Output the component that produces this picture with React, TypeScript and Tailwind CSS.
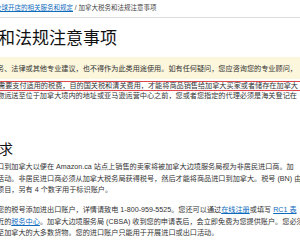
import type React from "react";

const FONT = "font-['Liberation_Sans','Noto_Sans_CJK_SC',sans-serif]";

const A: React.FC<{ children: React.ReactNode }> = ({ children }) => (
  <a href="#" className="text-[#0f6cbd] underline underline-offset-1">
    {children}
  </a>
);

const Line: React.FC<{ children: React.ReactNode; className?: string }> = ({
  children,
  className = "",
}) => (
  <div className={`-ml-[3px] whitespace-nowrap ${className}`}>{children}</div>
);

export default function App() {
  return (
    <div
      className={`w-[300px] h-[240px] overflow-hidden bg-white text-[#333] ${FONT}`}
    >
      {/* breadcrumb */}
      <div className="h-[18px] border-b border-[#dddddd] text-[6.5px] leading-[16px] whitespace-nowrap -ml-[5px] pl-0 w-[310px]">
        <A>全球开店的相关服务和规定</A>
        <span className="text-[#444]"> / 加拿大税务和法规注意事项</span>
      </div>

      {/* title */}
      <h1 className="mt-[9px] -ml-[87px] whitespace-nowrap text-[17px] leading-[24px] text-[#111] font-normal">
        加拿大税务和法规注意事项
      </h1>

      {/* notice */}
      <div className="mt-[6px] h-[22px] pt-[3px] bg-[#fcf6dc] text-[7.15px] leading-[19px] text-[#333]">
        <Line>
          务、法律或其他专业建议，也不得作为此类用途使用。如有任何疑问，您应咨询您的专业顾问，
        </Line>
      </div>

      {/* highlighted line */}
      <div className="mt-[2px] -ml-[10px] w-[330px] border border-[#e0474c] pl-[10px] text-[7.15px] leading-[8px]">
        <Line>
          需要支付适用的税费，目的国关税和清关费用，才能将商品销售给加拿大买家或者储存在加拿大
        </Line>
      </div>
      <div className="text-[7.15px] leading-[10px]">
        <Line>
          物运送至位于加拿大境内的地址或亚马逊运营中心之前，您或者您指定的代理必须是海关登记在
        </Line>
      </div>

      {/* section heading */}
      <h2 className="mt-[38px] -ml-[43px] whitespace-nowrap text-[14px] leading-[20px] text-[#111] font-normal">
        税务要求
      </h2>

      <div className="mt-[3px] text-[7.15px] leading-[11.5px]">
        <Line>
          口到加拿大以便在 Amazon.ca 站点上销售的卖家将被加拿大边境服务局视为非居民进口商。加
        </Line>
        <Line>
          活动。非居民进口商必须从加拿大税务局获得税号，然后才能将商品进口到加拿大。税号 (BN) 由
        </Line>
        <Line>项目，另有 4 个数字用于标识账户。</Line>
      </div>

      <div className="mt-[8.5px] text-[7.15px] leading-[11.5px]">
        <Line>
          您的税号添加进出口账户，详情请致电 1-800-959-5525。您还可以通过<A>在线注册</A>或填写 <A>RC1 表</A>
        </Line>
        <Line>
          近的<A>税务中心</A>。加拿大边境服务局 (CBSA) 收到您的申请表后，会立即免费为您提供账户。您必须
        </Line>
        <Line>至加拿大的大多数货物。您的进口账户只能用于开展进口或出口活动。</Line>
      </div>
    </div>
  );
}
